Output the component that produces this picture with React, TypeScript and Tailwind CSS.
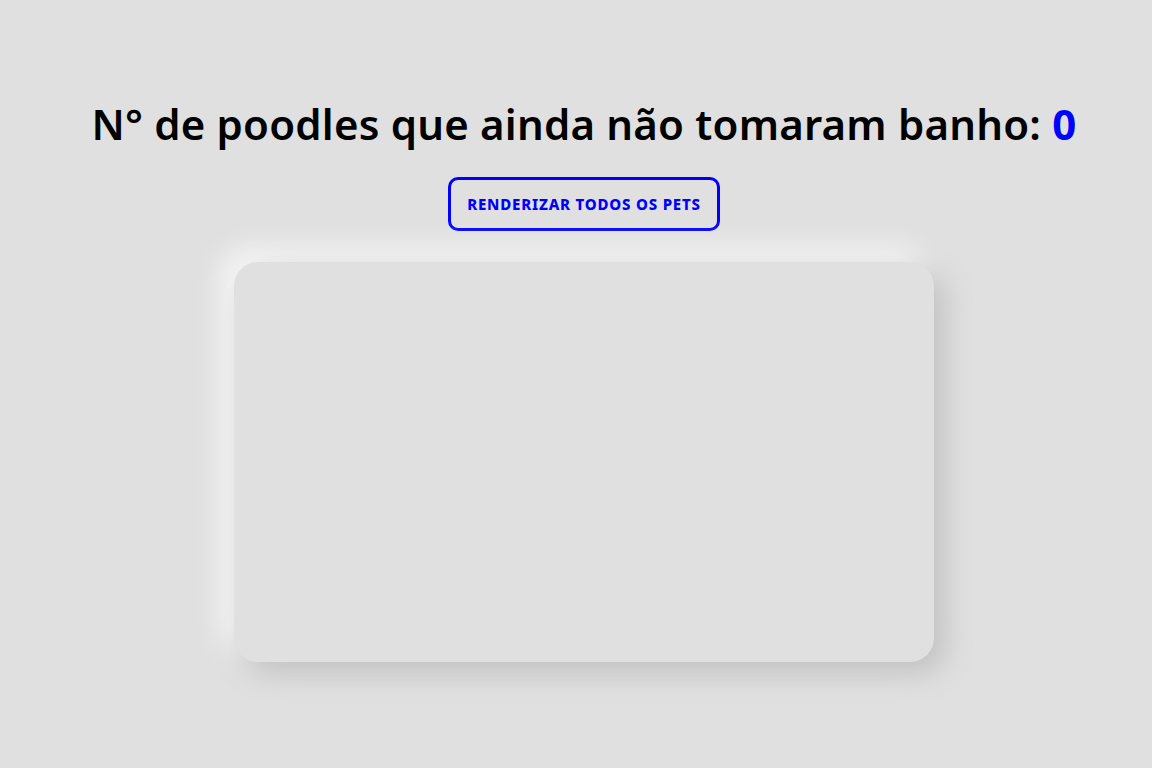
export default function App() {
  return (
    <div className="min-h-screen bg-[#e0e0e0] pl-4 pt-[95px] flex flex-col items-center font-['Noto_Sans',sans-serif]">
      <h1 className="text-[42px] leading-[58px] font-semibold text-black tracking-[0.2px]">
        N° de poodles que ainda não tomaram banho: <span className="text-[#0000ff] font-bold">0</span>
      </h1>
      <button className="mt-[24px] h-[54px] px-[16px] border-[3px] border-[#0000ff] rounded-[10px] text-[#0000ff] text-[15px] font-extrabold uppercase tracking-[0.8px]">
        Renderizar todos os pets
      </button>
      <div className="mt-[31px] w-[700px] h-[400px] rounded-[24px] bg-[#e0e0e0] shadow-[10px_10px_30px_#bebebe,-10px_-10px_30px_#ffffff]" />
    </div>
  );
}
